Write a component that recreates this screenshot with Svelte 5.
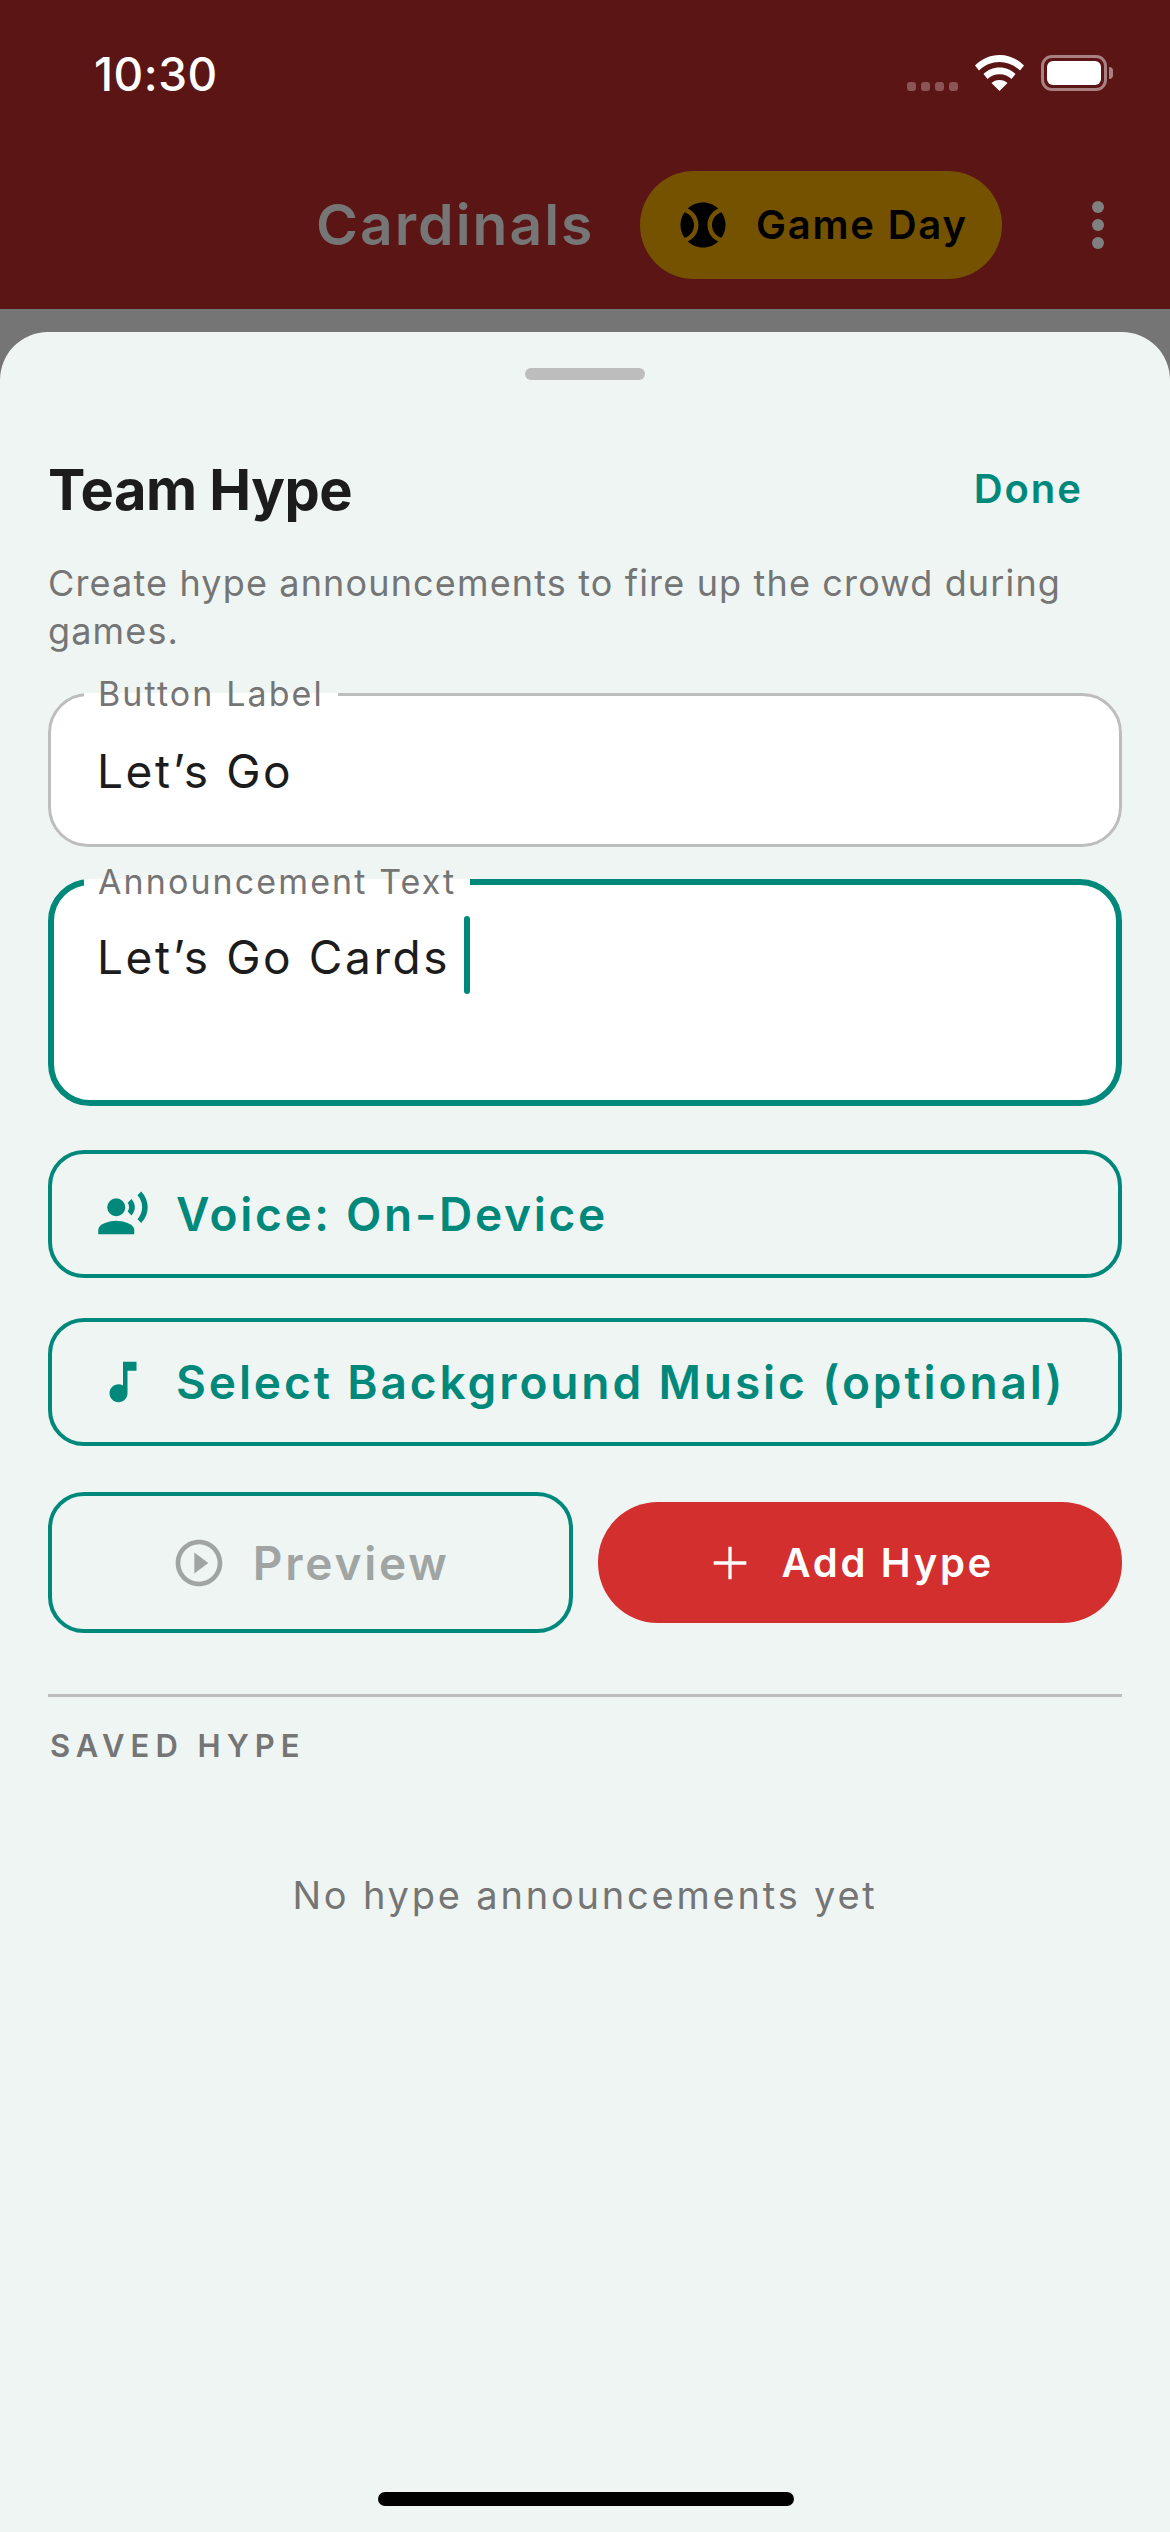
<script>
  const buttonLabel = 'Let’s Go';
  const announcement = 'Let’s Go Cards';
</script>

<div class="screen">
  <header class="top">
    <div class="status">
      <span class="time">10:30</span>
      <div class="status-icons">
        <div class="signal"><i></i><i></i><i></i><i></i></div>
        <svg class="wifi" viewBox="0 0 49 36" width="49" height="36">
          <path fill="#fff" d="M24.5 0C15 0 7 3.6 0 10.5l4 5C10 9.800 17 7 24.500 7S39 9.800 45 15.500l4-5C42 3.600 34 0 24.500 0z"/>
          <path fill="#fff" d="M24.500 12.500c-6.500 0-11.500 2.300-16 6.500l4 5c3.300-3 7-4.700 12-4.700s8.700 1.700 12 4.700l4-5c-4.500-4.200-9.500-6.500-16-6.500z"/>
          <path fill="#fff" d="M24.500 25c-3.500 0-5.700 1.100-8 3l8 8 8-8c-2.300-1.900-4.500-3-8-3z"/>
        </svg>
        <div class="battery"><div class="battery-fill"></div></div>
      </div>
    </div>
    <div class="appbar">
      <span class="team">Cardinals</span>
      <div class="game-day">
        <svg viewBox="0 0 24 24" width="54" height="54">
          <path d="M3.810 6.280C2.670 7.900 2 9.870 2 12s.67 4.100 1.810 5.720C6.230 16.950 8 14.680 8 12S6.230 7.050 3.810 6.280z"/>
          <path d="M20.190 6.280C17.770 7.050 16 9.320 16 12s1.770 4.950 4.190 5.720C21.330 16.100 22 14.130 22 12s-.67-4.100-1.810-5.720z"/>
          <path d="M14 12c0-3.280 1.970-6.090 4.790-7.330C17.010 3.020 14.630 2 12 2S6.990 3.020 5.210 4.670C8.030 5.910 10 8.720 10 12s-1.970 6.090-4.790 7.330C6.990 20.980 9.370 22 12 22s5.010-1.020 6.790-2.670C15.970 18.090 14 15.280 14 12z"/>
        </svg>
        <span>Game Day</span>
      </div>
      <div class="more"><i></i><i></i><i></i></div>
    </div>
  </header>

  <div class="scrim"></div>

  <section class="sheet">
    <div class="handle"></div>

    <div class="sheet-head">
      <h1>Team Hype</h1>
      <span class="done">Done</span>
    </div>
    <p class="intro">Create hype announcements to fire up the crowd during games.</p>

    <fieldset class="field">
      <legend>Button Label</legend>
      <div class="value">{buttonLabel}</div>
    </fieldset>

    <fieldset class="field focused">
      <legend>Announcement Text</legend>
      <div class="value">{announcement}<span class="caret"></span></div>
    </fieldset>

    <div class="outline-btn voice">
      <svg viewBox="0 0 24 24" width="54" height="54">
        <circle cx="9" cy="9" r="4"/>
        <path d="M9 15c-2.670 0-8 1.340-8 4v2h16v-2c0-2.660-5.330-4-8-4z"/>
        <path d="M15.760 5.360l-1.680 1.690c.84 1.180.84 2.710 0 3.890l1.680 1.690c2.020-2.020 2.020-5.070 0-7.270z"/>
        <path d="M20.070 2l-1.630 1.630c2.770 3.020 2.770 7.560 0 10.740L20.070 16c3.900-3.890 3.910-9.950 0-14z"/>
      </svg>
      <span>Voice: On-Device</span>
    </div>

    <div class="outline-btn music">
      <svg viewBox="0 0 24 24" width="54" height="54">
        <path d="M12 3v10.550c-.59-.34-1.270-.55-2-.55-2.210 0-4 1.790-4 4s1.790 4 4 4 4-1.790 4-4V7h4V3h-6z"/>
      </svg>
      <span>Select Background Music (optional)</span>
    </div>

    <div class="actions">
      <div class="preview">
        <svg viewBox="0 0 24 24" width="56" height="56">
          <path d="M10 16.500l6-4.500-6-4.500v9zM12 2C6.480 2 2 6.480 2 12s4.480 10 10 10 10-4.480 10-10S17.520 2 12 2zm0 18c-4.410 0-8-3.590-8-8s3.590-8 8-8 8 3.590 8 8-3.590 8-8 8z"/>
        </svg>
        <span>Preview</span>
      </div>
      <div class="add">
        <svg viewBox="0 0 24 24" width="56" height="56">
          <path d="M19 12.700h-6.300V19h-1.400v-6.300H5v-1.400h6.300V5h1.400v6.300H19v1.400z"/>
        </svg>
        <span>Add Hype</span>
      </div>
    </div>

    <div class="divider"></div>
    <h2>SAVED HYPE</h2>
    <p class="empty">No hype announcements yet</p>

    <div class="home-bar"></div>
  </section>
</div>

<style>
  :global(body) {
    margin: 0;
    background: #757575;
  }

  .screen {
    width: 1170px;
    height: 2532px;
    display: flex;
    flex-direction: column;
    overflow: hidden;
    font-family: Inter, "Noto Sans", sans-serif;
  }

  /* Top bar, dimmed by the sheet's scrim */
  .top {
    height: 309px;
    background: #5c1515;
    box-sizing: border-box;
    display: flex;
    flex-direction: column;
  }

  .status {
    height: 148px;
    display: flex;
    justify-content: space-between;
    align-items: flex-start;
    padding: 47px 63px 0 94px;
    box-sizing: border-box;
  }

  .time {
    color: #fff;
    font-size: 46px;
    font-weight: 500;
    line-height: 54px;
    letter-spacing: 0.5px;
  }

  .status-icons {
    display: flex;
    align-items: flex-start;
    padding-top: 8px;
  }

  .signal {
    display: flex;
    gap: 5px;
    margin-top: 27px;
    margin-right: 17px;
  }

  .signal i {
    width: 9px;
    height: 9px;
    border-radius: 3px;
    background: #8c5555;
  }

  .wifi {
    margin-right: 17px;
  }

  .battery {
    width: 66px;
    height: 36px;
    box-sizing: border-box;
    border: 3px solid #a88282;
    border-radius: 11px;
    padding: 3px;
    position: relative;
  }

  .battery::after {
    content: "";
    position: absolute;
    right: -9px;
    top: 9px;
    width: 4px;
    height: 12px;
    border-radius: 0 6px 6px 0;
    background: #a88282;
  }

  .battery-fill {
    height: 100%;
    background: #fff;
    border-radius: 6px;
  }

  .appbar {
    display: flex;
    align-items: center;
    padding-top: 23px;
  }

  .team {
    width: 274px;
    margin-left: 316px;
    color: #767676;
    font-size: 57px;
    font-weight: 600;
    line-height: 68px;
    letter-spacing: 2px;
    white-space: nowrap;
  }

  .game-day {
    margin-left: 50px;
    width: 362px;
    height: 108px;
    box-sizing: border-box;
    padding-left: 36px;
    border-radius: 54px;
    background: #745200;
    color: #000;
    display: flex;
    align-items: center;
    gap: 26px;
    font-size: 40px;
    font-weight: 600;
    letter-spacing: 1.8px;
  }

  .game-day span {
    margin-top: -2px;
  }

  .more {
    margin-left: 90px;
    display: flex;
    flex-direction: column;
    gap: 6px;
  }

  .more i {
    width: 12px;
    height: 12px;
    border-radius: 50%;
    background: #808080;
  }

  .scrim {
    height: 23px;
    background: #757575;
  }

  /* Sheet */
  .sheet {
    position: relative;
    flex: 1;
    background: #eff5f3;
    border-radius: 48px 48px 0 0;
    padding: 0 48px;
  }

  .handle {
    width: 120px;
    height: 12px;
    margin: 36px auto 0;
    border-radius: 6px;
    background: #bdbdbd;
  }

  .sheet-head {
    display: flex;
    justify-content: space-between;
    align-items: center;
    height: 70px;
    margin-top: 74px;
  }

  h1 {
    margin: 0;
    padding-top: 2px;
    font-size: 56px;
    font-weight: 700;
    letter-spacing: -0.5px;
    color: #1c1c1c;
  }

  .done {
    margin: -2px 39px 0 0;
    font-size: 40px;
    font-weight: 600;
    letter-spacing: 2px;
    color: #00897b;
  }

  .intro {
    margin: 35px 0 18px;
    font-size: 36px;
    line-height: 48px;
    letter-spacing: 1.15px;
    color: #757575;
  }

  .field {
    margin: 0;
    padding: 0;
    min-width: 0;
    height: 174px;
    box-sizing: border-box;
    background: #fff;
    border: 3px solid #bdbdbd;
    border-radius: 40px;
  }

  legend {
    margin-left: 33px;
    padding: 0 14px;
    height: 42px;
    font-size: 34px;
    line-height: 42px;
    letter-spacing: 2.1px;
    color: #757575;
  }

  .value {
    padding: 28px 0 0 46px;
    font-size: 46px;
    line-height: 56px;
    letter-spacing: 2.6px;
    color: #1c1c1c;
  }

  .caret {
    display: inline-block;
    width: 6px;
    height: 78px;
    margin-left: 14px;
    vertical-align: -20px;
    border-radius: 3px;
    background: #00897b;
  }

  .focused {
    height: 245px;
    margin-top: 14px;
    border: 6px solid #00897b;
    border-radius: 42px;
  }

  .focused legend {
    margin-left: 30px;
  }

  .focused .value {
    padding: 13px 0 0 43px;
  }

  .outline-btn {
    height: 128px;
    box-sizing: border-box;
    border: 4px solid #00897b;
    border-radius: 36px;
    display: flex;
    align-items: center;
    gap: 26px;
    padding-left: 44px;
    color: #00897b;
    font-size: 46px;
    font-weight: 600;
    letter-spacing: 2.9px;
    white-space: nowrap;
  }

  .voice {
    letter-spacing: 2.7px;
  }

  .outline-btn svg,
  .add svg {
    fill: currentColor;
  }

  .voice {
    margin-top: 44px;
  }

  .music {
    margin-top: 40px;
  }

  .actions {
    display: grid;
    grid-template-columns: 1fr 1fr;
    align-items: center;
    gap: 25px;
    margin-top: 46px;
  }

  .preview,
  .add {
    display: flex;
    align-items: center;
    justify-content: center;
    box-sizing: border-box;
  }

  .preview {
    height: 141px;
    border: 4px solid #00897b;
    border-radius: 36px;
    gap: 26px;
    color: #a0a5a3;
    font-size: 46px;
    font-weight: 600;
    letter-spacing: 2.8px;
  }

  .preview svg {
    fill: currentColor;
  }

  .add {
    height: 121px;
    padding-right: 24px;
    border-radius: 60px;
    background: #d32f2f;
    color: #fff;
    gap: 24px;
    font-size: 40px;
    font-weight: 600;
    letter-spacing: 2.7px;
  }

  .divider {
    height: 3px;
    margin-top: 61px;
    background: #bdbdbd;
  }

  h2 {
    margin: 30px 0 0 2px;
    font-size: 31px;
    font-weight: 600;
    line-height: 38px;
    letter-spacing: 6px;
    color: #757575;
  }

  .empty {
    margin: 106px 0 0;
    text-align: center;
    font-size: 38px;
    line-height: 48px;
    letter-spacing: 2.8px;
    color: #757575;
  }

  .home-bar {
    position: absolute;
    left: 378px;
    bottom: 26px;
    width: 416px;
    height: 14px;
    border-radius: 7px;
    background: #000;
  }
</style>
